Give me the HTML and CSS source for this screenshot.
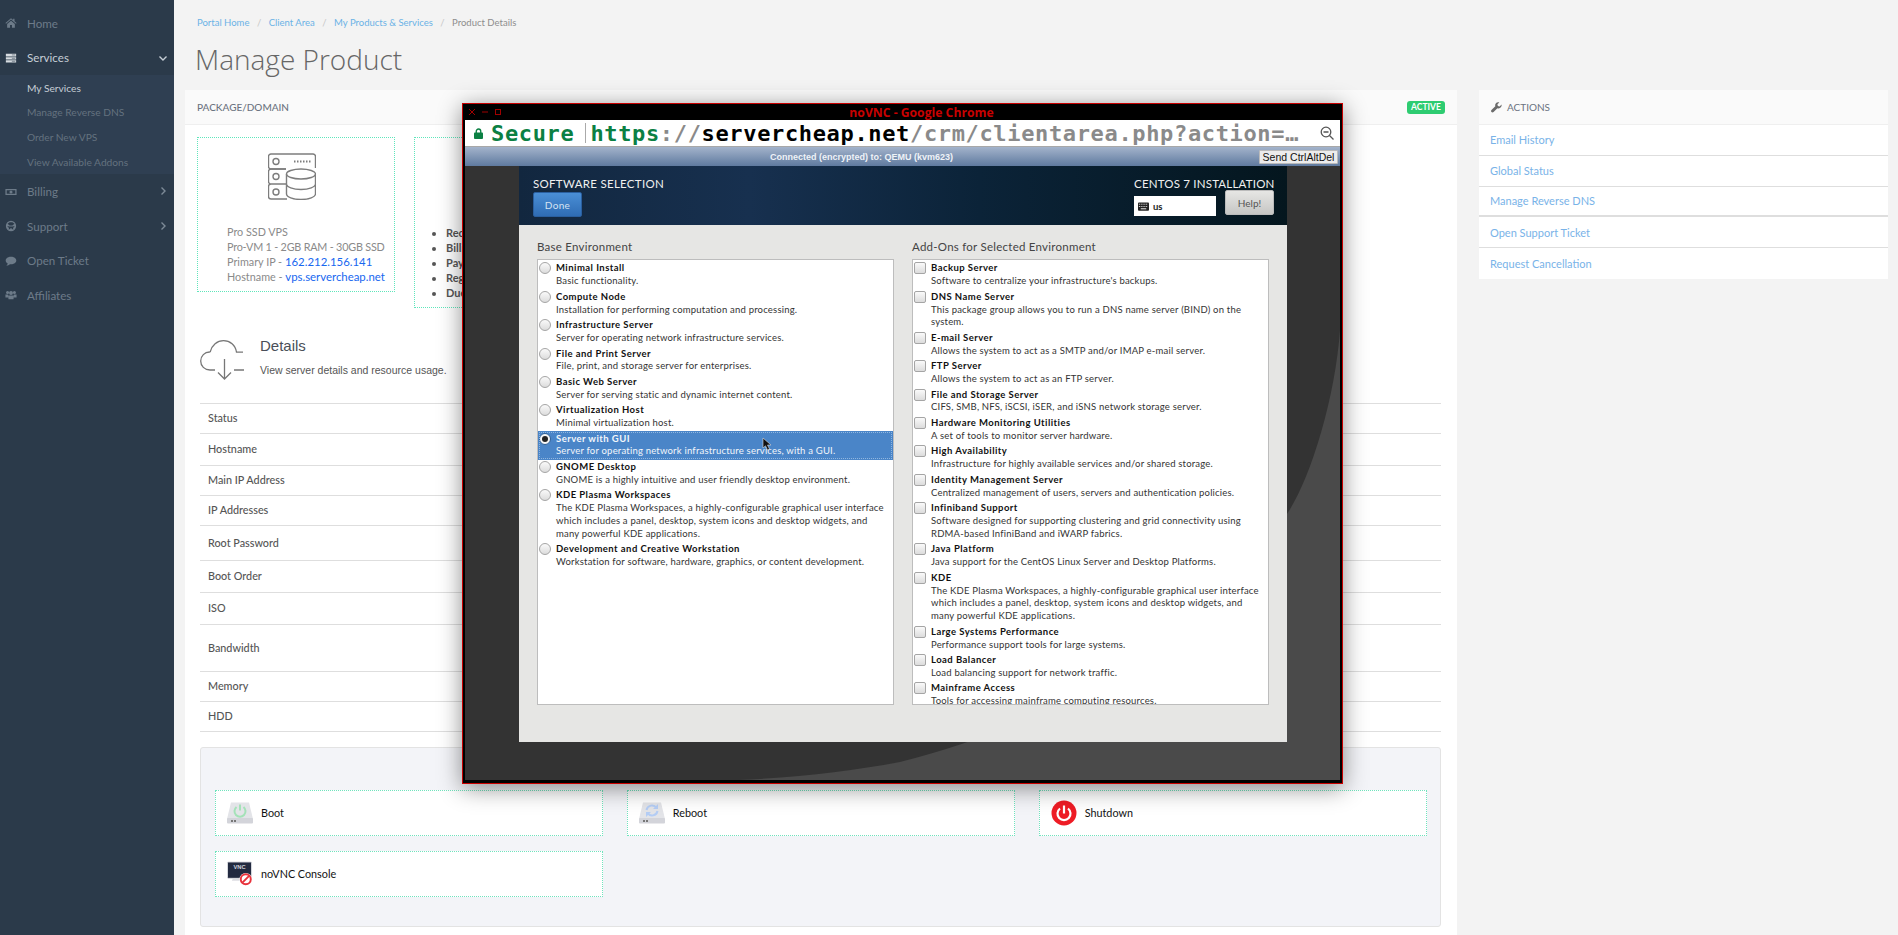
FILE: index.html
```html
<!DOCTYPE html>
<html lang="en">
<head>
<meta charset="utf-8">
<title>Manage Product</title>
<link rel="stylesheet" href="styles.css">
</head>
<body>
<aside class="sidebar">
  <nav>
    <a class="nav-item"><svg class="nav-icon" viewBox="0 0 14 12"><path d="M7 0.5 0.5 6l.7.8L7 2l5.8 4.8.7-.8-2.400-2V1h-1.600v1.600zM2.500 7.200V11.500h3.400V8.300h2.200v3.200h3.400V7.200L7 3.400z"/></svg><span>Home</span></a>
    <a class="nav-item nav-active"><svg class="nav-icon" viewBox="0 0 14 12"><path d="M1 1h12v3.200H1zM1 5h12v2.800H1zM1 8.600h12v2.600H1z"/><path class="cut" d="M8 2.400h4M8 6.400h4M8 9.900h4"/></svg><span>Services</span><svg class="chev" viewBox="0 0 10 10"><path d="M1.500 3.500 5 7l3.500-3.500"/></svg></a>
    <div class="subnav">
      <a class="sub-item sub-active">My Services</a>
      <a class="sub-item">Manage Reverse DNS</a>
      <a class="sub-item">Order New VPS</a>
      <a class="sub-item">View Available Addons</a>
    </div>
    <a class="nav-item"><svg class="nav-icon" viewBox="0 0 14 12"><path fill-rule="evenodd" d="M0.500 2.500h13v7h-13zM2 4v4h10V4z"/><circle cx="7" cy="6" r="1.800"/></svg><span>Billing</span><svg class="chev" viewBox="0 0 10 10"><path d="M3.500 1.500 7 5 3.500 8.500"/></svg></a>
    <a class="nav-item"><svg class="nav-icon" viewBox="0 0 14 14"><path fill-rule="evenodd" d="M7 1a6 6 0 1 0 0 12A6 6 0 0 0 7 1zM3 4.500l2.400 1.800h3.200L11 4.500 8.600 2.600H5.400zM2.600 7l2 2.400-.2 2 2.600-2 2.600 2-.2-2L11.400 7 9 7.600H5z"/></svg><span>Support</span><svg class="chev" viewBox="0 0 10 10"><path d="M3.500 1.500 7 5 3.500 8.500"/></svg></a>
    <a class="nav-item"><svg class="nav-icon" viewBox="0 0 14 12"><path d="M7 1C3.400 1 .8 3 .8 5.400c0 1.500 1 2.700 2.400 3.500C3 10 2.200 10.800 1.600 11.400 3.400 11.300 4.800 10.600 5.800 9.700 6.200 9.800 6.600 9.800 7 9.800c3.600 0 6.200-2 6.200-4.400S10.600 1 7 1z"/></svg><span>Open Ticket</span></a>
    <a class="nav-item"><svg class="nav-icon" viewBox="0 0 14 12"><circle cx="3" cy="3" r="1.800"/><circle cx="11" cy="3" r="1.800"/><circle cx="7" cy="3.600" r="2.300"/><path d="M0.500 5.500h3.200L4 9H0.500zM10.300 5.500h3.200V9H10zM4 6.600h6V11H4z"/></svg><span>Affiliates</span></a>
  </nav>
</aside>

<main class="content">
  <ol class="crumbs">
    <li><a>Portal Home</a></li>
    <li><a>Client Area</a></li>
    <li><a>My Products &amp; Services</a></li>
    <li class="current">Product Details</li>
  </ol>
  <h1 class="page-title">Manage Product</h1>

  <div class="columns">
    <section class="panel">
      <header class="panel-head">
        <span>PACKAGE/DOMAIN</span>
        <span class="badge">ACTIVE</span>
      </header>
      <div class="panel-body">
        <div class="pkg-row">
          <div class="pkg-box">
            <svg class="pkg-icon" viewBox="0 0 48 47" fill="none" stroke="#7d7d7d" stroke-width="1.400">
              <path d="M18 16H3a2.500 2.500 0 0 1-2.500-2.500v-10A2.500 2.500 0 0 1 3 1h42a2.500 2.500 0 0 1 2.500 2.500V15"/>
              <path d="M18 16H3a2.500 2.500 0 0 0-2.500 2.500v10A2.500 2.500 0 0 0 3 31h15M18 31H3a2.500 2.500 0 0 0-2.500 2.500v10A2.500 2.500 0 0 0 3 46h16"/>
              <circle cx="8" cy="8.500" r="3"/><circle cx="8" cy="23.500" r="3"/><circle cx="8" cy="39" r="3"/>
              <path d="M26 8.500h17" stroke-dasharray="1.500 1.500" stroke-width="2"/>
              <ellipse cx="33" cy="21" rx="14.500" ry="5"/>
              <path d="M18.500 21v20c0 3 6.500 5.500 14.500 5.500S47.500 44 47.500 41V21M18.500 31c0 3 6.500 5.500 14.500 5.500S47.500 34 47.500 31"/>
            </svg>
            <p class="pkg-line">Pro SSD VPS</p>
            <p class="pkg-line pkg-tight">Pro-VM 1 - 2GB RAM - 30GB SSD</p>
            <p class="pkg-line">Primary IP - <a class="strong-link">162.212.156.141</a></p>
            <p class="pkg-line">Hostname - <a class="strong-link">vps.servercheap.net</a></p>
          </div>
          <div class="pkg-box pkg-box-list">
            <ul class="pkg-list">
              <li>Recurring Amount</li>
              <li>Billing Cycle</li>
              <li>Payment Method</li>
              <li>Registration Date</li>
              <li>Due Date</li>
            </ul>
          </div>
        </div>

        <div class="details">
          <div class="details-head">
            <svg class="cloud" viewBox="0 0 44 40" fill="none" stroke="#777" stroke-width="1.300">
              <path d="M15 30H10C4.500 30 .7 26 .7 21c0-5 4-9 8.800-9 .3-.2.600-.4.800-.4C12 5.500 17 .7 23.500 .7c6.500 0 12 4.500 13 11.500h6.500"/>
              <path d="M34 30h10M24.500 19v20M18 32.500l6.500 6.500 6.500-6.500"/>
            </svg>
            <div>
              <h2 class="details-title">Details</h2>
              <p class="details-desc">View server details and resource usage.</p>
            </div>
          </div>
          <div class="spec-table">
            <div class="spec h30">Status</div>
            <div class="spec h32">Hostname</div>
            <div class="spec h30">Main IP Address</div>
            <div class="spec h30">IP Addresses</div>
            <div class="spec h35">Root Password</div>
            <div class="spec h32">Boot Order</div>
            <div class="spec h32">ISO</div>
            <div class="spec h47">Bandwidth</div>
            <div class="spec h30">Memory</div>
            <div class="spec h30">HDD</div>
          </div>

          <div class="actions-box">
            <a class="act-btn">
              <svg class="act-icon" viewBox="0 0 26 22"><path fill="#e3e4e8" d="M4 0.500h18L26 17H0z"/><rect y="16" width="26" height="5.500" rx="1" fill="#d3d4da"/><rect x="4" y="18" width="2" height="2" fill="#777"/><rect x="7" y="18" width="2" height="2" fill="#777"/><path fill="none" stroke="#a4e2b8" stroke-width="2" d="M9.500 5a5.500 5.500 0 1 0 7 0M13 2.500v6"/></svg>
              <span>Boot</span>
            </a>
            <a class="act-btn">
              <svg class="act-icon" viewBox="0 0 26 22"><path fill="#e3e4e8" d="M4 0.500h18L26 17H0z"/><rect y="16" width="26" height="5.500" rx="1" fill="#d3d4da"/><rect x="4" y="18" width="2" height="2" fill="#777"/><rect x="7" y="18" width="2" height="2" fill="#777"/><path fill="none" stroke="#b4cdf5" stroke-width="2" d="M7.500 8a5.500 5.500 0 0 1 10-2M18.500 9a5.500 5.500 0 0 1-10 2"/><path fill="#b4cdf5" d="M19 2v5h-5zM7 15v-5h5z"/></svg>
              <span>Reboot</span>
            </a>
            <a class="act-btn">
              <svg class="act-icon power" viewBox="0 0 26 26"><circle cx="13" cy="13" r="12.500" fill="#ee1c25"/><path fill="none" stroke="#fff" stroke-width="2.200" d="M9 8.500a6.500 6.500 0 1 0 8 0M13 5.500v8"/></svg>
              <span>Shutdown</span>
            </a>
            <a class="act-btn">
              <svg class="act-icon vnc" viewBox="0 0 27 26"><rect x="0.500" y="0.500" width="25" height="17" rx="1" fill="#222a40" stroke="#dcdde2"/><text class="vnc-label" x="13" y="8">VNC</text><path fill="#dcdde2" d="M6 18h12l1 2H5z"/><circle cx="19.500" cy="18.500" r="6.500" fill="#fff"/><circle cx="19.500" cy="18.500" r="5.200" fill="none" stroke="#e8323c" stroke-width="2"/><path stroke="#e8323c" stroke-width="2" d="M16 22l7-7"/></svg>
              <span>noVNC Console</span>
            </a>
          </div>
        </div>
      </div>
    </section>

    <aside class="side-panel">
      <header class="side-head">
        <svg class="wrench" viewBox="0 0 12 12"><path d="M11.500 2.800 9.400 4.900 7.500 4.400 7 2.500 9.100 .5C7.600 0 6 .4 5.200 1.500 4.500 2.400 4.400 3.500 4.700 4.500L.5 8.700c-.6.600-.6 1.600 0 2.300.7.600 1.700.6 2.300 0L7 6.800c1 .4 2.200.2 3.100-.5 1.100-.8 1.700-2.200 1.400-3.500z"/></svg>
        <span>ACTIONS</span>
      </header>
      <a class="side-link">Email History</a>
      <a class="side-link">Global Status</a>
      <a class="side-link side-link-thick">Manage Reverse DNS</a>
      <a class="side-link">Open Support Ticket</a>
      <a class="side-link side-link-last">Request Cancellation</a>
    </aside>
  </div>
</main>

<div class="vnc-window">
  <div class="win-title">
    <div class="win-controls">
      <svg viewBox="0 0 8 8"><path d="M1 1l6 6M7 1 1 7"/></svg>
      <svg viewBox="0 0 8 8"><path d="M1 4h6"/></svg>
      <svg viewBox="0 0 8 8"><rect x="1.500" y="1.500" width="5" height="5"/></svg>
    </div>
    <span class="win-name">noVNC - Google Chrome</span>
  </div>
  <div class="url-bar">
    <svg class="lock" viewBox="0 0 10 12"><path fill="none" stroke="#0b8043" stroke-width="1.500" d="M2.500 6V3.500a2.500 2.500 0 0 1 5 0V6"/><rect y="5" width="10" height="7" rx="1" fill="#0b8043"/></svg>
    <span class="url-secure">Secure</span>
    <span class="url-sep"></span>
    <span class="url-text"><span class="url-green">https</span><span class="url-grey">://</span><span class="url-black">servercheap.net</span><span class="url-grey">/crm/clientarea.php?action=…</span></span>
    <svg class="zoom-icon" viewBox="0 0 14 14" fill="none" stroke="#555" stroke-width="1.300"><circle cx="6" cy="6" r="4.800"/><path d="M3.500 6h5M9.500 9.500l4 4" /></svg>
  </div>
  <div class="novnc-bar">
    <span class="novnc-status">Connected (encrypted) to: QEMU (kvm623)</span>
    <button class="cad-btn">Send CtrlAltDel</button>
  </div>
  <div class="screen">
    <svg class="swoosh" viewBox="0 0 875 614"><path fill="#4a4a4a" d="M875 164C870 234 845 314 822 348 715 484 585 559 435 596 375 607 315 614 235 615L875 615z"/></svg>
    <div class="installer">
      <header class="inst-head">
        <div class="inst-left">
          <div class="inst-title">SOFTWARE SELECTION</div>
          <button class="done-btn">Done</button>
        </div>
        <div class="inst-right">
          <div class="inst-title inst-title-right">CENTOS 7 INSTALLATION</div>
          <div class="inst-tools">
            <div class="kbd-field">
              <svg viewBox="0 0 12 9"><rect width="12" height="9" rx="1" fill="#222"/><path stroke="#fff" stroke-dasharray="1 1" d="M1 2h10M1 4.500h10"/><path stroke="#fff" d="M3 7h6"/></svg>
              <span>us</span>
            </div>
            <button class="help-btn">Help!</button>
          </div>
        </div>
      </header>
      <div class="inst-body">
        <div class="inst-col">
          <h3 class="col-title">Base Environment</h3>
          <div class="opt-list">
            <div class="opt"><i class="radio"></i><div><b>Minimal Install</b><p>Basic functionality.</p></div></div>
            <div class="opt"><i class="radio"></i><div><b>Compute Node</b><p>Installation for performing computation and processing.</p></div></div>
            <div class="opt"><i class="radio"></i><div><b>Infrastructure Server</b><p>Server for operating network infrastructure services.</p></div></div>
            <div class="opt"><i class="radio"></i><div><b>File and Print Server</b><p>File, print, and storage server for enterprises.</p></div></div>
            <div class="opt"><i class="radio"></i><div><b>Basic Web Server</b><p>Server for serving static and dynamic internet content.</p></div></div>
            <div class="opt"><i class="radio"></i><div><b>Virtualization Host</b><p>Minimal virtualization host.</p></div></div>
            <div class="opt opt-selected"><i class="radio radio-on"></i><div><b>Server with GUI</b><p>Server for operating network infrastructure services, with a GUI.</p></div>
              <svg class="cursor" viewBox="0 0 10 14"><path fill="#111" stroke="#ddd" stroke-width=".6" d="M1 1v10l2.500-2.200L5.500 13l2-1-2-4H9z"/></svg>
            </div>
            <div class="opt"><i class="radio"></i><div><b>GNOME Desktop</b><p>GNOME is a highly intuitive and user friendly desktop environment.</p></div></div>
            <div class="opt"><i class="radio"></i><div><b>KDE Plasma Workspaces</b><p>The KDE Plasma Workspaces, a highly-configurable graphical user interface<br>which includes a panel, desktop, system icons and desktop widgets, and<br>many powerful KDE applications.</p></div></div>
            <div class="opt"><i class="radio"></i><div><b>Development and Creative Workstation</b><p>Workstation for software, hardware, graphics, or content development.</p></div></div>
          </div>
        </div>
        <div class="inst-col">
          <h3 class="col-title">Add-Ons for Selected Environment</h3>
          <div class="opt-list">
            <div class="opt"><i class="check"></i><div><b>Backup Server</b><p>Software to centralize your infrastructure's backups.</p></div></div>
            <div class="opt"><i class="check"></i><div><b>DNS Name Server</b><p>This package group allows you to run a DNS name server (BIND) on the<br>system.</p></div></div>
            <div class="opt"><i class="check"></i><div><b>E-mail Server</b><p>Allows the system to act as a SMTP and/or IMAP e-mail server.</p></div></div>
            <div class="opt"><i class="check"></i><div><b>FTP Server</b><p>Allows the system to act as an FTP server.</p></div></div>
            <div class="opt"><i class="check"></i><div><b>File and Storage Server</b><p>CIFS, SMB, NFS, iSCSI, iSER, and iSNS network storage server.</p></div></div>
            <div class="opt"><i class="check"></i><div><b>Hardware Monitoring Utilities</b><p>A set of tools to monitor server hardware.</p></div></div>
            <div class="opt"><i class="check"></i><div><b>High Availability</b><p>Infrastructure for highly available services and/or shared storage.</p></div></div>
            <div class="opt"><i class="check"></i><div><b>Identity Management Server</b><p>Centralized management of users, servers and authentication policies.</p></div></div>
            <div class="opt"><i class="check"></i><div><b>Infiniband Support</b><p>Software designed for supporting clustering and grid connectivity using<br>RDMA-based InfiniBand and iWARP fabrics.</p></div></div>
            <div class="opt"><i class="check"></i><div><b>Java Platform</b><p>Java support for the CentOS Linux Server and Desktop Platforms.</p></div></div>
            <div class="opt"><i class="check"></i><div><b>KDE</b><p>The KDE Plasma Workspaces, a highly-configurable graphical user interface<br>which includes a panel, desktop, system icons and desktop widgets, and<br>many powerful KDE applications.</p></div></div>
            <div class="opt"><i class="check"></i><div><b>Large Systems Performance</b><p>Performance support tools for large systems.</p></div></div>
            <div class="opt"><i class="check"></i><div><b>Load Balancer</b><p>Load balancing support for network traffic.</p></div></div>
            <div class="opt"><i class="check"></i><div><b>Mainframe Access</b><p>Tools for accessing mainframe computing resources.</p></div></div>
          </div>
        </div>
      </div>
    </div>
  </div>
</div>
</body>
</html>
```

FILE: styles.css
```css
* { box-sizing: border-box; }
html, body { height: 100%; overflow: hidden; }
body {
  margin: 0;
  display: flex;
  background: #f3f3f3;
  font-family: "Lato", "Noto Sans", sans-serif;
  font-size: 12px;
  color: #555;
}
p, h1, h2, h3, ul, ol { margin: 0; padding: 0; }
a { text-decoration: none; }

/* Sidebar */
.sidebar { width: 174px; flex: none; background: #2b3a4a; padding-top: 6px; }
.nav-item {
  display: flex;
  align-items: center;
  height: 34.600px;
  padding-left: 5px;
  color: #6d7b89;
  font-size: 11.600px;
  position: relative;
}
.nav-icon { width: 12px; height: 12px; flex: none; margin-right: 10px; fill: #6d7b89; }
.nav-active { color: #c6ced6; }
.nav-active .nav-icon { fill: #d6dbe0; }
.cut { stroke: #2b3a4a; stroke-width: .6; fill: none; }
.chev { position: absolute; right: 6px; top: 12px; width: 10px; height: 10px; fill: none; stroke: #7d8a97; stroke-width: 1.400; }
.nav-active .chev { stroke: #c6ced6; }
.subnav { background: #2f3f52; }
.sub-item { display: flex; align-items: center; height: 24.800px; padding-left: 27px; color: #64727f; font-size: 10.200px; }
.sub-active { color: #c6ced6; }

/* Main */
.content { flex: 1; padding: 14px 10px 0 11px; min-width: 0; }
.crumbs { display: flex; list-style: none; padding-left: 12px; height: 16px; align-items: center; font-size: 9.500px; }
.crumbs li { color: #8d8d8d; }
.crumbs a { color: #6ab2e6; }
.crumbs li + li::before { content: "/"; color: #c6c6c6; padding: 0 7.500px; }
.page-title {
  font-family: "Open Sans", sans-serif;
  font-weight: 300;
  font-size: 28px;
  line-height: 58px;
  margin-left: 10px;
  color: #666;
  height: 60px;
}
.columns { display: flex; gap: 22px; align-items: flex-start; }

.panel { width: 1272px; flex: none; background: #fff; height: 845px; overflow: hidden; }
.panel-head {
  display: flex;
  justify-content: space-between;
  align-items: center;
  height: 35px;
  padding: 0 12px;
  background: #fafafa;
  border-bottom: 1px solid #efefef;
  color: #6b7380;
  font-size: 10px;
  font-weight: 500;
}
.badge {
  background: #2ecc71;
  color: #fff;
  font-size: 8.500px;
  font-weight: 700;
  border-radius: 3px;
  width: 38px;
  height: 13px;
  line-height: 13px;
  text-align: center;
}
.panel-body { padding: 12px 12px 0; }
.pkg-row { display: flex; gap: 19px; align-items: flex-start; }
.pkg-box { width: 198px; border: 1px dotted #5fe6bb; padding: 15px 0 8px 29px; height: 155px; }
.pkg-box-list { height: 171px; padding: 87px 0 0 18px; }
.pkg-icon { display: block; width: 48px; height: 47px; margin: 0 0 23.500px 41px; }
.pkg-line { line-height: 15px; font-size: 10.800px; color: #8a8a8a; white-space: nowrap; }
.pkg-tight { letter-spacing: -.2px; }
.strong-link { color: #1767f0; font-size: 11.400px; }
.pkg-list { font-size: 11px; line-height: 15px; color: #555; font-weight: 700; padding-left: 13px; }

.details { margin: 32px 4px 0 3px; }
.details-head { display: flex; gap: 16px; height: 63px; }
.cloud { width: 44px; height: 40px; flex: none; }
.details-title { font-family: "Liberation Sans", sans-serif; font-weight: 400; font-size: 15px; line-height: 16px; color: #4a4f58; margin-top: -2px; }
.details-desc { font-family: "Liberation Sans", sans-serif; font-size: 10.500px; line-height: 14px; margin-top: 9px; color: #555; }
.spec-table { border-top: 1px solid #dedede; }
.spec { display: flex; align-items: center; padding: 0 0 2px 8px; border-bottom: 1px solid #dedede; font-size: 10.800px; color: #555; font-weight: 500; }
.h30 { height: 30px; }
.h32 { height: 32px; }
.h35 { height: 35px; }
.h47 { height: 47px; }

.actions-box {
  margin-top: 15px;
  height: 180px;
  background: #f3f4f8;
  border: 1px solid #e3e3e3;
  border-radius: 3px;
  padding: 42px 13px 0 14px;
  display: grid;
  grid-template-columns: repeat(3, 1fr);
  column-gap: 23.500px;
  row-gap: 15px;
  grid-auto-rows: 46px;
}
.act-btn {
  display: flex;
  align-items: center;
  gap: 8px;
  padding-left: 11px;
  background: #fff;
  border: 1px dotted #70e3bd;
  color: #111;
  font-size: 10.800px;
}
.act-btn span { padding-bottom: 2px; }
.act-icon { width: 26px; height: 22px; flex: none; }
.power { height: 26px; }
.vnc { height: 26px; }
.vnc-label { font: 700 6px "Liberation Sans", sans-serif; fill: #cfd2db; text-anchor: middle; }

/* Right panel */
.side-panel { width: 409px; flex: none; background: #fff; }
.side-head {
  display: flex;
  align-items: center;
  gap: 5px;
  height: 35px;
  padding-left: 12px;
  background: #fafafa;
  border-bottom: 1px solid #efefef;
  color: #6b7380;
  font-size: 10px;
}
.wrench { width: 11px; height: 11px; fill: #6b6b6b; }
.side-link { display: flex; align-items: center; height: 30.800px; padding-left: 11px; color: #79b3e8; font-size: 11px; border-bottom: 1px solid #dedede; }
.side-link-thick { border-bottom-width: 2px; }
.side-link-last { border-bottom: 0; }

/* noVNC window */
.vnc-window {
  position: absolute;
  left: 462px;
  top: 103px;
  width: 881px;
  height: 681px;
  background: #000;
  border: 1px solid #c80000;
  padding: 0 2px 3px;
  box-shadow: 0 4px 22px rgba(0, 0, 0, .45);
}
.win-title { height: 16px; display: flex; align-items: center; justify-content: center; position: relative; }
.win-controls { position: absolute; left: 3px; top: 4px; display: flex; gap: 5px; }
.win-controls svg { width: 8px; height: 8px; fill: none; stroke: #a00000; stroke-width: 1; }
.win-name { font-family: "Open Sans", sans-serif; font-weight: 700; font-size: 12.200px; color: #c80000; margin-left: 38px; }
.url-bar {
  height: 27px;
  background: #fff;
  border-bottom: 1px solid #a8a8a8;
  display: flex;
  align-items: center;
  padding-left: 9px;
  font-family: "DejaVu Sans Mono", monospace;
  font-size: 22px;
  letter-spacing: .65px;
  font-weight: 700;
  white-space: nowrap;
  position: relative;
}
.lock { width: 9px; height: 11px; margin-right: 8px; flex: none; }
.url-secure { color: #0b8043; }
.url-sep { width: 1px; height: 20px; background: #aaa; margin: 0 4px 0 11px; flex: none; }
.url-green { color: #0b8043; }
.url-grey { color: #8a8a8a; }
.url-black { color: #000; }
.zoom-icon { position: absolute; right: 6px; top: 6px; width: 14px; height: 14px; }
.novnc-bar {
  height: 19px;
  background: linear-gradient(#a3b3cb, #5f7a9f);
  position: relative;
  display: flex;
  justify-content: center;
  align-items: center;
}
.novnc-status { font: 700 9px "Liberation Sans", sans-serif; color: #eef2f7; margin-right: 82px; }
.cad-btn {
  position: absolute;
  right: 2px;
  top: 3px;
  width: 79px;
  height: 14px;
  padding: 0;
  background: #ececec;
  border: 1px solid #bbb;
  border-radius: 1px;
  font: 400 10.500px "Liberation Sans", sans-serif;
  color: #111;
}
.screen { position: relative; height: 614px; background: #333; padding-left: 54px; overflow: hidden; }
.swoosh { position: absolute; left: 0; top: 0; width: 875px; height: 614px; }
.installer { position: relative; width: 768px; height: 576px; background: #e6e6e4; font-family: "Lato", sans-serif; }
.inst-head {
  height: 59px;
  background: linear-gradient(90deg, #12273f 0%, #17304f 30%, #0b2338 60%, #04161e 100%);
  display: flex;
  justify-content: space-between;
  padding: 11px 13px 0 14px;
  color: #eee;
}
.inst-title { font-size: 11.500px; line-height: 13px; color: #f0f0f0; letter-spacing: .3px; white-space: nowrap; }
.inst-title-right { letter-spacing: .2px; }
.done-btn {
  display: block;
  margin-top: 2px;
  width: 49px;
  height: 25px;
  background: linear-gradient(#4a8fd6, #2f6cb4);
  border: 1px solid #2a5f9f;
  border-radius: 2px;
  color: #d6e4f2;
  font: 400 10px "Lato", sans-serif;
  letter-spacing: .3px;
}
.inst-right { text-align: right; width: 140px; }
.inst-tools { display: flex; justify-content: space-between; margin-top: 0; }
.kbd-field { width: 82px; height: 20px; margin-top: 6px; background: #fff; display: flex; align-items: center; gap: 4px; padding-left: 4px; font-size: 9.500px; font-weight: 700; color: #222; }
.kbd-field svg { width: 11px; height: 9px; }
.help-btn {
  width: 49px;
  height: 25px;
  padding: 0;
  background: linear-gradient(#e6e6e4, #c6c6c4);
  border: 1px solid #bbb;
  border-radius: 2px;
  color: #555;
  font: 400 10px "Lato", sans-serif;
}
.inst-body { display: flex; gap: 18px; padding: 15px 18px 0; }
.inst-col { flex: 1; min-width: 0; }
.col-title { font-size: 11.500px; line-height: 14px; height: 19px; font-weight: 400; color: #444; letter-spacing: .25px; }
.opt-list { height: 446px; padding-top: 1px; background: #fff; border: 1px solid #bdbdbd; overflow: hidden; }
.opt { display: flex; padding: 1.400px 0; position: relative; color: #222; white-space: nowrap; font-size: 9.500px; line-height: 12.800px; }
.opt b { display: block; font-weight: 700; color: #111; letter-spacing: .45px; }
.opt p { color: #333; letter-spacing: .2px; }
.radio { width: 12px; height: 12px; border-radius: 50%; border: 1px solid #a5a5a5; background: linear-gradient(#fafafa, #dcdcdc); margin: 0 5px 0 1px; flex: none; }
.radio-on { background: #f6f6f6; border-color: #2d5f96; display: flex; align-items: center; justify-content: center; }
.radio-on::after { content: ""; width: 6px; height: 6px; border-radius: 50%; background: #222; }
.check { width: 12px; height: 12px; border-radius: 2px; border: 1px solid #a5a5a5; background: linear-gradient(#fafafa, #dcdcdc); margin: 0 5px 0 1px; flex: none; }
.opt-selected { background: #4a85c8; color: #fff; outline: 1px dotted #8fb6df; outline-offset: -2px; }
.opt-selected b, .opt-selected p { color: #f2f6fb; }
.cursor { position: absolute; left: 224px; top: 6px; width: 10px; height: 14px; }
```
